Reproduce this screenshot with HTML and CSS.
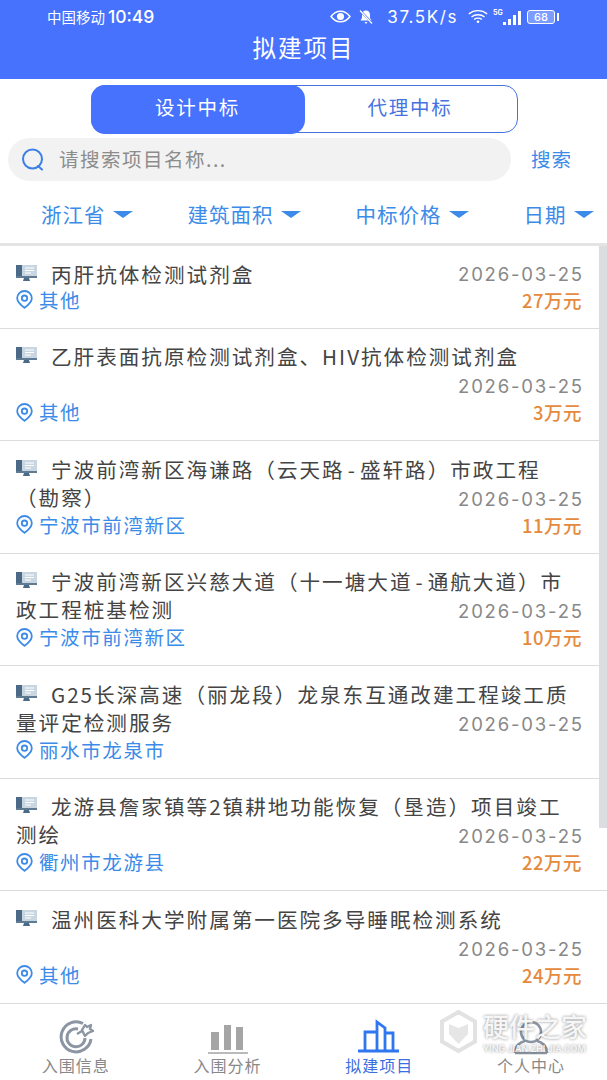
FILE: index.html
```html
<!DOCTYPE html>
<html lang="zh-CN">
<head>
    <meta charset="UTF-8">
    <meta name="viewport" content="width=device-width, initial-scale=1.0">
    <title>拟建项目</title>
    <link rel="stylesheet" href="styles.css">
</head>
<body>
    <svg class="defs" width="0" height="0">
        <symbol id="monitor" viewBox="0 0 21 16">
            <rect x="0" y="0" width="6" height="11" fill="#4a6a88"/>
            <rect x="6" y="0" width="15" height="11" fill="#c8d6e2"/>
            <path d="M9 3h9M9 5.500h9M9 8h6" stroke="#fff" stroke-width="1"/>
            <rect x="0" y="11" width="21" height="2" fill="#5f7b94"/>
            <path d="M8 13h5l1 3H7z" fill="#4a6a88"/>
        </symbol>
        <symbol id="pin" viewBox="0 0 17 19">
            <path d="M8.500 1C4.400 1 1.200 4.200 1.200 8.200c0 2.900 2.300 5.900 7.300 9.600 5-3.700 7.300-6.700 7.300-9.600C15.800 4.200 12.600 1 8.500 1z" fill="none" stroke="#3c8be8" stroke-width="1.800"/>
            <circle cx="8.500" cy="8.200" r="2.700" fill="none" stroke="#3c8be8" stroke-width="1.800"/>
        </symbol>
    </svg>

    <header class="topbar">
        <div class="status">
            <span class="carrier">中国移动</span>
            <span class="clock">10:49</span>
            <span class="status-right">
                <svg width="21" height="13" viewBox="0 0 20 12"><path d="M1 6c2.500-3.500 5.500-5 9-5s6.500 1.500 9 5c-2.500 3.500-5.500 5-9 5S3.500 9.500 1 6z" fill="none" stroke="#fff" stroke-width="1.400"/><circle cx="10" cy="6" r="3.400" fill="#fff"/></svg>
                <svg class="st-bell" width="16" height="16" viewBox="0 0 16 16"><path d="M8 1.500c-2.600 0-4 2-4 4.500v3L2.500 11.500h11L12 9V6c0-2.500-1.400-4.500-4-4.500z" fill="#fff"/><path d="M6.500 13h3L8 15z" fill="#fff"/><path d="M2.500 2l11.500 12" stroke="#4672fd" stroke-width="2.200"/><path d="M2 1.500l12 13" stroke="#fff" stroke-width="1.200"/></svg>
                <span class="speed">37.5K/s</span>
                <svg class="st-wifi" width="20" height="15" viewBox="0 0 23 16"><path d="M1 5c6-5 15-5 21 0M4 8.500c4-3.300 11-3.300 15 0M7 11.500c2.500-2 6.500-2 9 0" fill="none" stroke="#fff" stroke-width="1.600"/><circle cx="11.500" cy="14" r="1.500" fill="#fff"/></svg>
                <span class="signal">
                    <small>5G</small>
                    <i class="b1"></i><i class="b2"></i><i class="b3"></i><i class="b4"></i>
                </span>
                <span class="battery"><b>68</b></span>
            </span>
        </div>
        <h1>拟建项目</h1>
    </header>

    <div class="tabs">
        <div class="tab active">设计中标</div>
        <div class="tab">代理中标</div>
    </div>

    <div class="search-row">
        <div class="search-box">
            <svg width="24" height="24" viewBox="0 0 24 24"><circle cx="11.500" cy="11" r="9.500" fill="none" stroke="#3c7fe6" stroke-width="2"/><path d="M17 18l4 3.500" stroke="#3c7fe6" stroke-width="2" stroke-linecap="round"/></svg>
            <span class="hint">请搜索项目名称...</span>
        </div>
        <div class="search-btn">搜索</div>
    </div>

    <div class="filters">
        <div class="filter">浙江省<i></i></div>
        <div class="filter">建筑面积<i></i></div>
        <div class="filter">中标价格<i></i></div>
        <div class="filter">日期<i></i></div>
    </div>

    <div class="list">
        <div class="item">
            <div class="title"><svg class="monitor"><use href="#monitor"/></svg>丙肝抗体检测试剂盒<span class="date">2026-03-25</span></div>
            <div class="foot"><span class="place"><svg class="pin"><use href="#pin"/></svg>其他</span><span class="price">27万元</span></div>
        </div>
        <div class="item">
            <div class="title"><svg class="monitor"><use href="#monitor"/></svg>乙肝表面抗原检测试剂盒、HIV抗体检测试剂盒<span class="date">2026-03-25</span></div>
            <div class="foot"><span class="place"><svg class="pin"><use href="#pin"/></svg>其他</span><span class="price">3万元</span></div>
        </div>
        <div class="item">
            <div class="title"><svg class="monitor"><use href="#monitor"/></svg>宁波前湾新区海谦路（云天路<span class="dash">-</span>盛轩路）市政工程（勘察）<span class="date">2026-03-25</span></div>
            <div class="foot"><span class="place"><svg class="pin"><use href="#pin"/></svg>宁波市前湾新区</span><span class="price">11万元</span></div>
        </div>
        <div class="item">
            <div class="title"><svg class="monitor"><use href="#monitor"/></svg>宁波前湾新区兴慈大道（十一塘大道<span class="dash">-</span>通航大道）市政工程桩基检测<span class="date">2026-03-25</span></div>
            <div class="foot"><span class="place"><svg class="pin"><use href="#pin"/></svg>宁波市前湾新区</span><span class="price">10万元</span></div>
        </div>
        <div class="item">
            <div class="title"><svg class="monitor"><use href="#monitor"/></svg>G25长深高速（丽龙段）龙泉东互通改建工程竣工质量评定检测服务<span class="date">2026-03-25</span></div>
            <div class="foot"><span class="place"><svg class="pin"><use href="#pin"/></svg>丽水市龙泉市</span></div>
        </div>
        <div class="item">
            <div class="title"><svg class="monitor"><use href="#monitor"/></svg>龙游县詹家镇等2镇耕地功能恢复（垦造）项目竣工测绘<span class="date">2026-03-25</span></div>
            <div class="foot"><span class="place"><svg class="pin"><use href="#pin"/></svg>衢州市龙游县</span><span class="price">22万元</span></div>
        </div>
        <div class="item">
            <div class="title"><svg class="monitor"><use href="#monitor"/></svg>温州医科大学附属第一医院多导睡眠检测系统<span class="date">2026-03-25</span></div>
            <div class="foot"><span class="place"><svg class="pin"><use href="#pin"/></svg>其他</span><span class="price">24万元</span></div>
        </div>
        <div class="scrollbar"></div>
    </div>

    <nav class="tabbar">
        <div class="nav-item">
            <svg width="44" height="36" viewBox="0 0 44 36"><path d="M29 4.500A15 15 0 1 0 37 20" fill="none" stroke="#8b95a3" stroke-width="3"/><path d="M24 10A9 9 0 1 0 31 19" fill="none" stroke="#8b95a3" stroke-width="3"/><path d="M23 15l5-3M28 11l3-5 2 2 4-2-1 4 3 2-5 2-3 3z" fill="none" stroke="#8b95a3" stroke-width="2.400" stroke-linejoin="round"/></svg>
            <span>入围信息</span>
        </div>
        <div class="nav-item">
            <svg width="44" height="36" viewBox="0 0 44 36"><path d="M5 13h8v18H5zM18 6h7v25h-7zM30 8h7v23h-7z" fill="#a5a5a5"/><path d="M2 34h40" stroke="#a5a5a5" stroke-width="1.600"/></svg>
            <span>入围分析</span>
        </div>
        <div class="nav-item on">
            <svg width="44" height="36" viewBox="0 0 44 36"><path d="M8 31V13h12M20 31V3l8 6v22M28 14h8v17" fill="none" stroke="#2f77f0" stroke-width="2.800"/><path d="M1 32h41" stroke="#2f77f0" stroke-width="3"/></svg>
            <span>拟建项目</span>
        </div>
        <div class="nav-item">
            <svg width="44" height="36" viewBox="0 0 44 36"><circle cx="22" cy="13" r="10" fill="none" stroke="#8b95a3" stroke-width="2.600"/><path d="M6 34c0-7 5-11 10-12M38 34c0-7-5-11-10-12M6 34h32" fill="none" stroke="#8b95a3" stroke-width="2.600"/></svg>
            <span>个人中心</span>
        </div>
        <div class="watermark">
            <svg width="37" height="43" viewBox="0 0 37 43"><path d="M18.500 2L35 11.500v20L18.500 41 2 31.500v-20z" fill="#fff" stroke="#e2e2e2" stroke-width="4"/><path d="M9 14l9.500 4 9.500-4v10l-9.500 10L9 24z" fill="#e6e6e6"/></svg>
            <div class="wm-text">
                <div class="wm-cn">硬件之家</div>
                <div class="wm-en">YING JIAN ZHI JIA.COM</div>
            </div>
        </div>
    </nav>
</body>
</html>
```

FILE: styles.css
```css
* {
    box-sizing: border-box;
}
body {
    margin: 0;
    width: 607px;
    height: 1080px;
    overflow: hidden;
    display: flex;
    flex-direction: column;
    background-color: #fff;
    font-family: "Noto Sans CJK SC", "Noto Sans", sans-serif;
}
.defs {
    position: absolute;
}

/* top blue bar */
.topbar {
    height: 79px;
    flex: none;
    background-color: #4672fd;
    color: #fff;
}
.status {
    height: 33px;
    padding-left: 47px;
    display: flex;
    align-items: center;
}
.carrier {
    font-size: 14.500px;
}
.clock {
    margin-left: 3px;
    font-family: "Inter", sans-serif;
    font-size: 17.500px;
    font-weight: 500;
}
.status-right {
    margin-left: auto;
    margin-right: 52px;
    display: flex;
    align-items: center;
}
.st-bell {
    margin-left: 7px;
}
.speed {
    margin-left: 13px;
    font-family: "Inter", sans-serif;
    font-size: 17px;
    letter-spacing: 1.600px;
}
.st-wifi {
    margin-left: 10px;
}
.signal {
    position: relative;
    margin-left: 5px;
    width: 28px;
    height: 16px;
    display: flex;
    align-items: flex-end;
    gap: 2px;
    padding-left: 10px;
}
.signal small {
    position: absolute;
    left: 0;
    top: -1px;
    font-family: "Inter", sans-serif;
    font-size: 7px;
    font-weight: 700;
}
.signal i {
    width: 3px;
    background-color: #fff;
}
.signal .b1 { height: 3px; }
.signal .b2 { height: 6px; }
.signal .b3 { height: 10px; }
.signal .b4 { height: 14px; }
.battery {
    position: relative;
    margin-left: 6px;
    width: 28px;
    height: 14px;
    border: 1px solid #fff;
    border-radius: 3px;
    background-color: #7d9cff;
    font-family: "Inter", sans-serif;
    font-size: 11px;
    line-height: 12px;
    text-align: center;
}
.battery b {
    font-weight: 500;
}
.battery::after {
    content: "";
    position: absolute;
    right: -5px;
    top: 2px;
    width: 2px;
    height: 8px;
    background-color: #fff;
}
h1 {
    margin: 0;
    font-size: 23.500px;
    font-weight: 400;
    line-height: 28px;
    text-align: center;
    letter-spacing: 2px;
}

/* segmented switch */
.tabs {
    flex: none;
    display: flex;
    width: 427px;
    height: 48px;
    margin: 6px 0 0 91px;
    border: 1.500px solid #4672e0;
    border-radius: 14px;
}
.tab {
    flex: 1;
    margin: -1.500px;
    padding-bottom: 5px;
    display: flex;
    align-items: center;
    justify-content: center;
    font-size: 19.500px;
    letter-spacing: 1.700px;
    color: #4672e0;
}
.tab.active {
    flex: none;
    width: 214px;
    background-color: #4672fd;
    border-radius: 14px;
    color: #fff;
}

/* search */
.search-row {
    flex: none;
    display: flex;
    align-items: center;
    margin: 5px 0 0 8px;
}
.search-box {
    width: 503px;
    height: 43px;
    padding-left: 13px;
    display: flex;
    align-items: center;
    gap: 14px;
    border-radius: 22px;
    background-color: #f2f2f2;
    color: #8c8c8c;
    font-size: 19.500px;
    letter-spacing: 1.500px;
}
.hint {
    padding-bottom: 3px;
}
.search-btn {
    margin-left: 20px;
    padding-bottom: 3px;
    font-size: 19.500px;
    color: #3c8be8;
    letter-spacing: 1px;
}

/* filter row */
.filters {
    flex: none;
    height: 62px;
    padding: 4px 0 0 41px;
    display: flex;
    align-items: center;
    gap: 55px;
    color: #3c8be8;
    font-size: 20.500px;
    letter-spacing: 1px;
}
.filter {
    display: flex;
    align-items: center;
}
.filter i {
    margin-left: 7px;
    width: 0;
    height: 0;
    border-left: 10px solid transparent;
    border-right: 10px solid transparent;
    border-top: 7px solid #3c8be8;
}

/* project list */
.list {
    position: relative;
    flex: 1;
    overflow: hidden;
    border-top: 3px solid #e4e4e4;
}
.item {
    padding: 13.500px 25px 13px 16px;
    border-bottom: 1px solid #dcdcdc;
}
.title {
    font-size: 20.600px;
    line-height: 28px;
    letter-spacing: 2px;
    color: #444;
}
.monitor {
    display: inline-block;
    width: 21px;
    height: 16px;
    margin-right: 14px;
    vertical-align: 2px;
}
.dash {
    margin: 0 3px;
}
.date {
    float: right;
    margin-top: 2px;
    margin-right: -1.800px;
    font-family: "Inter", sans-serif;
    font-size: 18.500px;
    letter-spacing: 1.800px;
    color: #888;
}
.item:first-child .date {
    margin-top: 0;
}
.foot {
    clear: both;
    height: 27px;
    padding-bottom: 3px;
    display: flex;
    justify-content: space-between;
    line-height: 24px;
}
.place {
    display: flex;
    align-items: center;
    font-size: 19.500px;
    letter-spacing: 1.600px;
    color: #3c8be8;
}
.pin {
    width: 17px;
    height: 19px;
    margin-right: 6px;
}
.price {
    font-size: 18.500px;
    font-weight: 500;
    letter-spacing: .500px;
    color: #e58a3c;
}
.scrollbar {
    position: absolute;
    right: 0;
    top: 0;
    width: 8px;
    height: 582px;
    background-color: #dcdde0;
}

/* bottom navigation */
.tabbar {
    position: relative;
    flex: none;
    height: 76px;
    display: flex;
    background-color: #fff;
}
.nav-item {
    flex: 1;
    padding-top: 15px;
    display: flex;
    flex-direction: column;
    align-items: center;
    font-size: 16px;
    line-height: 20px;
    letter-spacing: 1px;
    color: #888;
}
.nav-item.on {
    color: #3c6fe0;
}
.watermark {
    position: absolute;
    left: 440px;
    top: 6px;
    display: flex;
    gap: 6px;
    color: #f6f6f6;
    text-shadow: 0 0 3px rgba(0,0,0,.45);
}
.wm-cn {
    font-size: 26px;
    line-height: 32px;
    font-weight: 500;
}
.wm-en {
    margin-top: 1px;
    font-family: "Inter", sans-serif;
    font-size: 8.900px;
    font-weight: 600;
    line-height: 11px;
    white-space: nowrap;
}
```
